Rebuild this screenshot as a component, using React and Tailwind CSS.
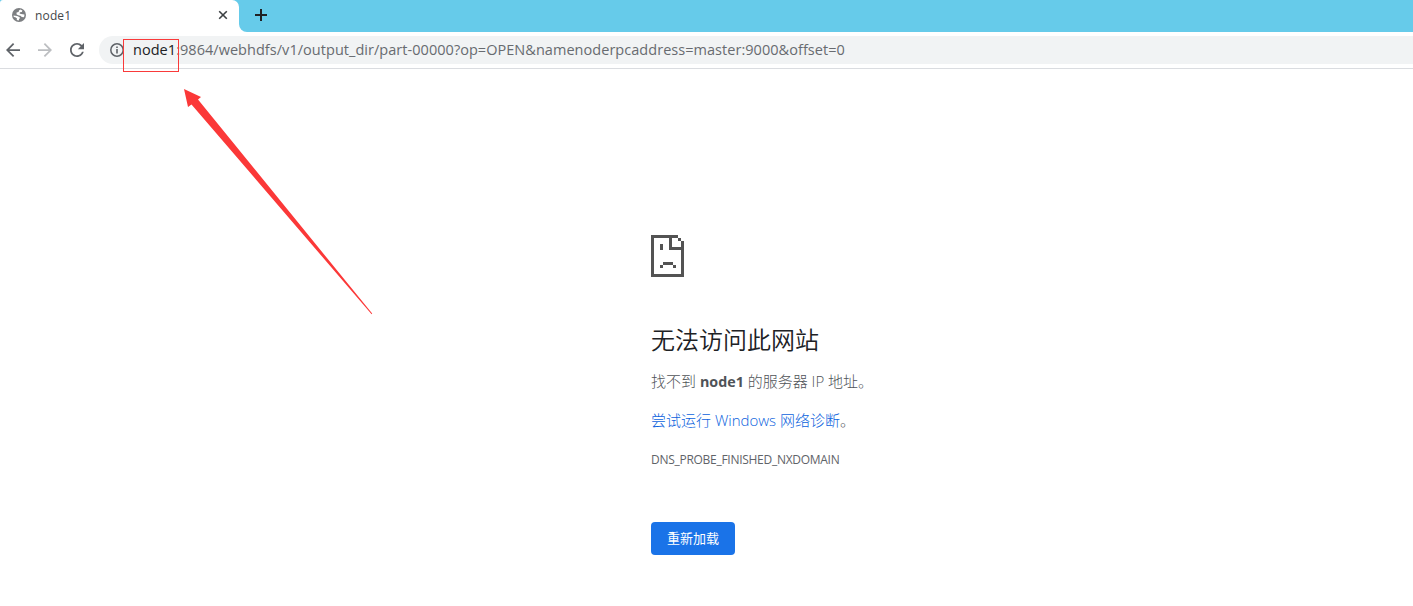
import React from "react";

function GlobeIcon() {
    return (
        <svg className="w-[14px] h-[14px] shrink-0" viewBox="0 0 14 14">
            <circle cx="7" cy="7" r="7" fill="#7d7f82" />
            <path
                d="M8.2 1.6L10.4 2.5L9.8 3.9L7.9 4.3L7.6 5.4L9 6L12.4 6.4C12.6 7.4 12.3 8.4 11.9 9.2L9.8 8.9L8.5 7.7L6.2 7.3L4.5 6.2L4.6 4.6L6.6 3.9L7 2.4Z"
                fill="#fff"
            />
            <path
                d="M1.5 7.6L5.2 7.9L7.2 9.1L8.2 10.1L7 11L6.9 12.5C6 12.5 5.3 12.3 4.7 12L5 10.4L3.3 9.3L1.8 9.1Z"
                fill="#fff"
            />
        </svg>
    );
}

function TabStrip() {
    return (
        <div className="flex h-8 bg-[#66cbea]">
            <div className="flex w-[239px] items-center rounded-tr-[7px] rounded-tl-[3px] bg-white pl-3 pr-[11px] pb-[2px]">
                <GlobeIcon />
                <span className="ml-[9px] flex-1 pt-px text-[12px] leading-4 tracking-[0.15px] text-[#45474a]">
                    node1
                </span>
                <svg className="w-[10px] h-[10px]" viewBox="0 0 10 10">
                    <path d="M1.2 1.2L8.8 8.8M8.8 1.2L1.2 8.8" stroke="#3c4043" strokeWidth="1.6" />
                </svg>
            </div>
            <div className="flex-1 bg-white">
                <div className="flex h-8 items-center rounded-bl-[8px] bg-[#66cbea] pb-[2px] pl-4">
                    <svg className="w-3 h-3" viewBox="0 0 12 12">
                        <path d="M6 0V12M0 6H12" stroke="#202124" strokeWidth="2" />
                    </svg>
                </div>
            </div>
        </div>
    );
}

function Toolbar() {
    return (
        <div className="flex h-[37px] items-center border-b border-[#dadce0] pl-[6px]">
            {/* Back */}
            <svg className="w-[14px] h-[14px]" viewBox="4 4 16 16" fill="#5f6368">
                <path d="M20 11H7.83l5.59-5.59L12 4l-8 8 8 8 1.41-1.41L7.83 13H20v-2z" />
            </svg>
            {/* Forward */}
            <svg className="ml-[18px] w-[14px] h-[14px]" viewBox="4 4 16 16" fill="#bcbec1">
                <path d="M12 4l-1.41 1.41L16.17 11H4v2h12.17l-5.58 5.59L12 20l8-8z" />
            </svg>
            {/* Reload */}
            <svg className="ml-[18px] w-[14px] h-[14px]" viewBox="4 4 16 16" fill="#5f6368">
                <path d="M17.65 6.35C16.2 4.9 14.21 4 12 4c-4.42 0-7.99 3.58-7.99 8s3.57 8 7.99 8c3.73 0 6.84-2.55 7.73-6h-2.08c-.82 2.33-3.04 4-5.65 4-3.31 0-6-2.69-6-6s2.69-6 6-6c1.66 0 3.14.69 4.22 1.78L13 11h7V4l-2.35 2.35z" />
            </svg>
            <div className="ml-[15px] flex h-7 flex-1 items-center rounded-l-full bg-[#f1f3f4] pl-[11px]">
                <svg className="w-[14px] h-[14px]" viewBox="0 0 14 14">
                    <circle cx="7" cy="7" r="6.2" fill="none" stroke="#5f6368" strokeWidth="1.5" />
                    <path d="M7 6V10.5M7 3.4V5" stroke="#5f6368" strokeWidth="1.6" />
                </svg>
                <div className="ml-[9px] whitespace-nowrap text-[14.5px] leading-5 tracking-[0.04px] text-[#686b70]">
                    <span className="text-[#202124]">node1</span>
                    :9864/webhdfs/v1/output_dir/part-00000?op=OPEN&amp;namenoderpcaddress=master:9000&amp;offset=0
                </div>
            </div>
        </div>
    );
}

function SadPage() {
    return (
        <svg
            className="w-[33px] h-[42px]"
            viewBox="0 0 33 42"
            fill="#535353"
            shapeRendering="crispEdges"
        >
            <path d="M0 0H27V3H3V39H30V15H18V3H21V12H30V6H33V42H0Z" />
            <path d="M27 3H30V6H27ZM9 9H12V15H9Z" />
            <path d="M12 27H22V30H12ZM9 30H12V33H9ZM22 30H25V33H22Z" />
        </svg>
    );
}

export default function App() {
    return (
        <div className="relative h-[606px] w-[1413px] overflow-hidden bg-white font-['Open_Sans','Noto_Sans_CJK_SC',sans-serif]">
            <TabStrip />
            <Toolbar />

            <main className="ml-[651px] mt-[166px] flex flex-col items-start text-[#4f5358]">
                <SadPage />
                <h1 className="mt-[47px] text-[24px] leading-8 font-[350] text-[#202124]">
                    无法访问此网站
                </h1>
                <p className="mt-[13px] whitespace-nowrap text-[15px] leading-6 font-light">
                    找不到 <strong className="text-[14.3px] font-bold">node1</strong> 的服务器 IP 地址。
                </p>
                <p className="mt-[14px] whitespace-nowrap text-[15px] leading-6 font-light">
                    <a href="#" className="text-[#0b62dd]">
                        尝试运行 Windows 网络诊断
                    </a>
                    。
                </p>
                <p className="mt-[18px] text-[12px] leading-5 tracking-[-0.28px] text-[#5f6368]">
                    DNS_PROBE_FINISHED_NXDOMAIN
                </p>
                <button className="mt-[52px] h-[33px] w-[84px] rounded-[4px] bg-[#1a73e8] text-[13px] text-white">
                    重新加载
                </button>
            </main>

            {/* Marker around the host name */}
            <div className="absolute left-[123px] top-[39px] h-[33px] w-[56px] border border-[#f93a3a]" />
            <svg
                className="absolute left-[180px] top-[85px] w-[200px] h-[235px]"
                viewBox="180 85 200 235"
            >
                <path
                    d="M184 89L201 97L198 99.5L372.2 313.6L371.600 314.2L191.5 104.500L188 107Z"
                    fill="#fb3838"
                />
            </svg>
        </div>
    );
}
